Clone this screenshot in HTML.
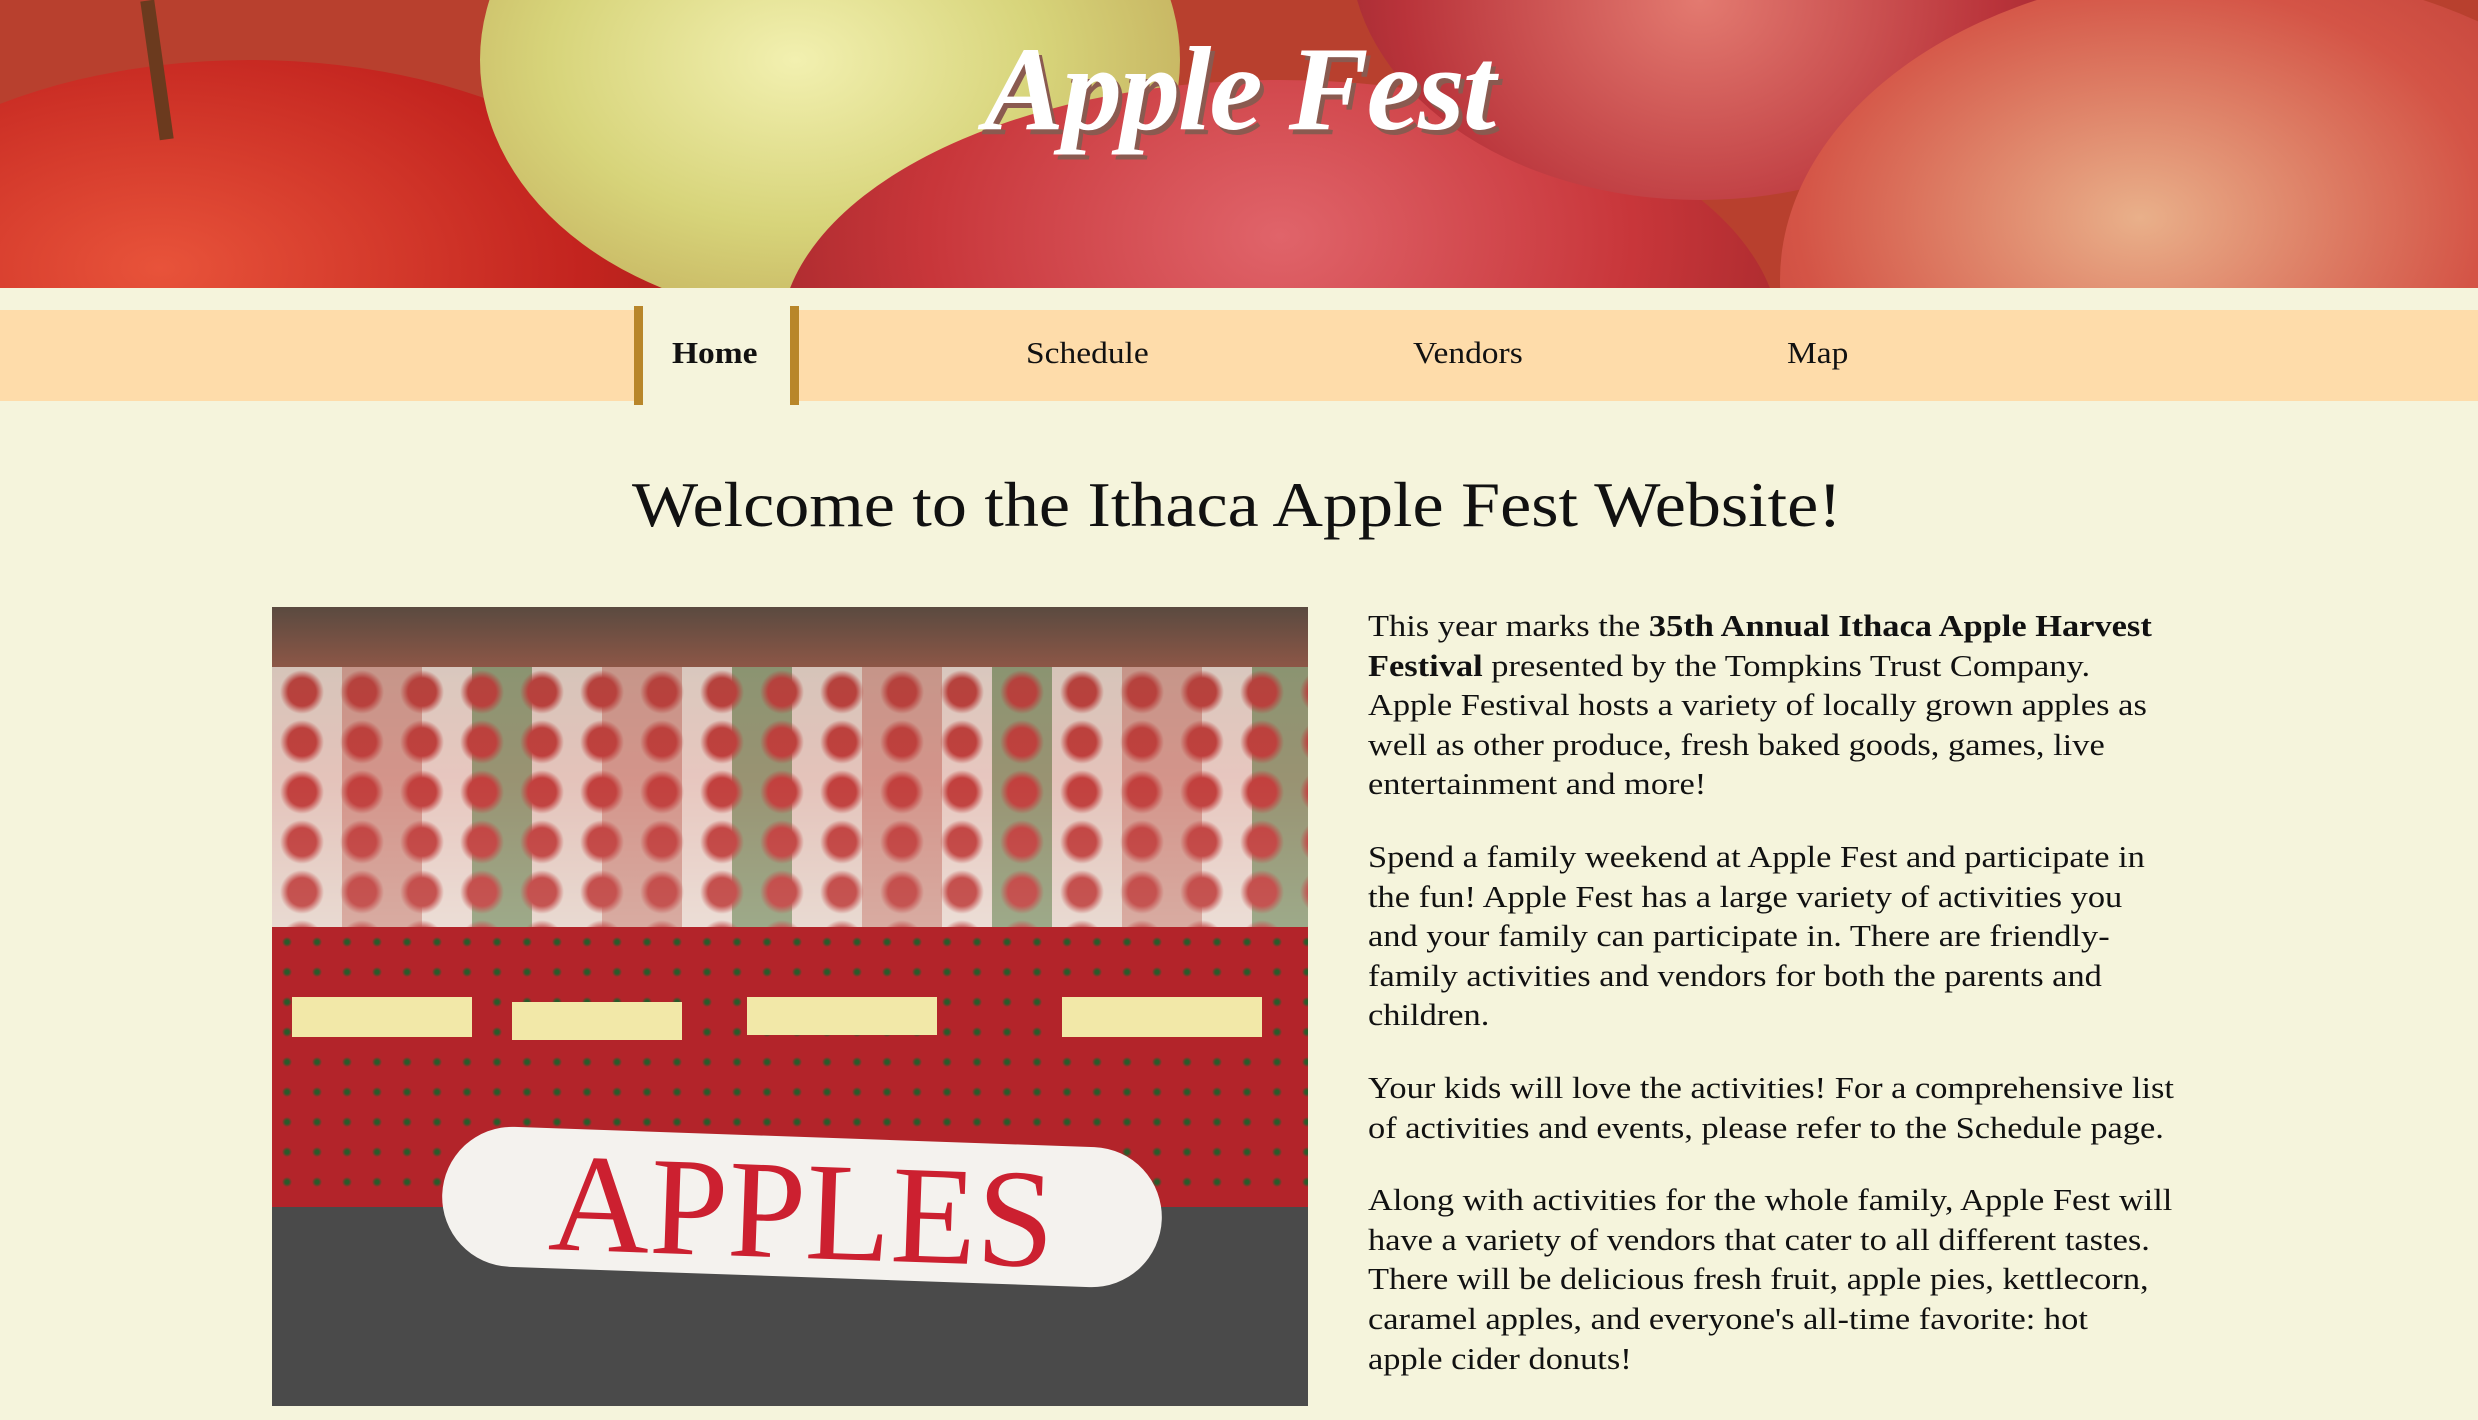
<!DOCTYPE html>
<html><head><meta charset="utf-8"><style>
*{margin:0;padding:0;box-sizing:border-box}
body{width:2478px;height:1420px;overflow:hidden;background:#f5f4dc;font-family:"Palatino Linotype","Book Antiqua",Palatino,"Liberation Serif",serif;color:#111;position:relative}
.hdr{position:absolute;left:0;top:0;width:2478px;height:288px;overflow:hidden;background:#b8402e}
.ap{position:absolute;border-radius:50%}
.logo{position:absolute;left:0;width:2478px;top:20px;text-align:center;font-family:"Liberation Serif",serif;font-style:italic;font-weight:bold;font-size:120px;color:#fff;text-shadow:4px 5px 0 #8a5a50;letter-spacing:-2px}
.nav{position:absolute;left:0;top:310px;width:2478px;height:91px;background:#fedcaa}
.home{position:absolute;left:634px;top:306px;width:165px;height:99px;background:#f5f4dc;border-left:9px solid #b8862a;border-right:9px solid #b8862a}
.nl{position:absolute;top:335px;font-size:31px;transform:scaleX(1.08);transform-origin:left}
h1{position:absolute;left:632px;top:468px;font-weight:normal;font-size:64px;white-space:nowrap;transform:scaleX(1.095);transform-origin:left}
.photo{position:absolute;left:272px;top:607px;width:1036px;height:799px;overflow:hidden;background:#3a3a3a}
.txt{position:absolute;left:1368px;top:606px;font-size:31px;line-height:39.6px;white-space:nowrap;transform:scaleX(1.11);transform-origin:left}
.txt p{margin-bottom:33px}
</style></head><body>
<div class="hdr">
 <div class="ap" style="left:-200px;top:60px;width:900px;height:520px;background:radial-gradient(ellipse at 40% 40%,#e8533a,#c3241f 55%,#8e1a14)"></div>
 <div class="ap" style="left:480px;top:-200px;width:700px;height:520px;background:radial-gradient(ellipse at 45% 50%,#f2f0b0,#d7d47a 45%,#b99a4c)"></div>
 <div class="ap" style="left:780px;top:80px;width:1000px;height:520px;background:radial-gradient(ellipse at 50% 30%,#e0646a,#c8363a 50%,#8d1f22)"></div>
 <div class="ap" style="left:1350px;top:-300px;width:700px;height:500px;background:radial-gradient(ellipse at 50% 60%,#e37a70,#b9333a 60%,#86222a)"></div>
 <div class="ap" style="left:1780px;top:-30px;width:900px;height:620px;background:radial-gradient(ellipse at 40% 40%,#e9b08a,#d45446 45%,#a82a2a)"></div>
 <div style="position:absolute;left:150px;top:0;width:14px;height:140px;background:#6b3a1e;transform:rotate(-8deg)"></div>
 <div class="logo">Apple Fest</div>
</div>
<div class="nav"></div>
<div class="home"></div>
<div class="nl" style="left:672px;font-weight:bold">Home</div>
<div class="nl" style="left:1026px">Schedule</div>
<div class="nl" style="left:1413px">Vendors</div>
<div class="nl" style="left:1787px">Map</div>
<h1>Welcome to the Ithaca Apple Fest Website!</h1>
<div class="photo">
 <div style="position:absolute;left:0;top:0;width:100%;height:380px;background:linear-gradient(180deg,#5a4a40,#9a5a48 20%,#c8544a 45%,#e0d6cc)"></div>
 <div style="position:absolute;left:0;top:60px;width:100%;height:320px;opacity:.75;background:radial-gradient(circle,#c03a3a 14px,transparent 22px) 0 0/60px 50px,repeating-linear-gradient(90deg,#eee8e0 0 70px,#d8aaa0 70px 150px,#f2ede6 150px 200px,#8aa880 200px 260px)"></div>
 <div style="position:absolute;left:0;top:320px;width:100%;height:290px;background:radial-gradient(circle,#2a5a2a 2px,transparent 5px) 0 0/30px 30px,#b3242a"></div>
 <div style="position:absolute;left:20px;top:390px;width:180px;height:40px;background:#f2e8a8"></div>
 <div style="position:absolute;left:240px;top:395px;width:170px;height:38px;background:#f2e8a8"></div>
 <div style="position:absolute;left:475px;top:390px;width:190px;height:38px;background:#f2e8a8"></div>
 <div style="position:absolute;left:790px;top:390px;width:200px;height:40px;background:#f2e8a8"></div>
 <div style="position:absolute;left:0;top:600px;width:100%;height:200px;background:#4a4a4a"></div>
 <div style="position:absolute;left:170px;top:530px;width:720px;height:140px;background:#f4f2ee;border-radius:70px;transform:rotate(2deg);font-family:'Liberation Serif',serif;font-size:140px;color:#cc2030;text-align:center;line-height:150px">APPLES</div>
</div>
<div class="txt">
<p>This year marks the <b>35th Annual Ithaca Apple Harvest</b><br><b>Festival</b> presented by the Tompkins Trust Company.<br>Apple Festival hosts a variety of locally grown apples as<br>well as other produce, fresh baked goods, games, live<br>entertainment and more!</p>
<p>Spend a family weekend at Apple Fest and participate in<br>the fun! Apple Fest has a large variety of activities you<br>and your family can participate in. There are friendly-<br>family activities and vendors for both the parents and<br>children.</p>
<p>Your kids will love the activities! For a comprehensive list<br>of activities and events, please refer to the Schedule page.</p>
<p>Along with activities for the whole family, Apple Fest will<br>have a variety of vendors that cater to all different tastes.<br>There will be delicious fresh fruit, apple pies, kettlecorn,<br>caramel apples, and everyone's all-time favorite: hot<br>apple cider donuts!</p>
</div>
</body></html>
